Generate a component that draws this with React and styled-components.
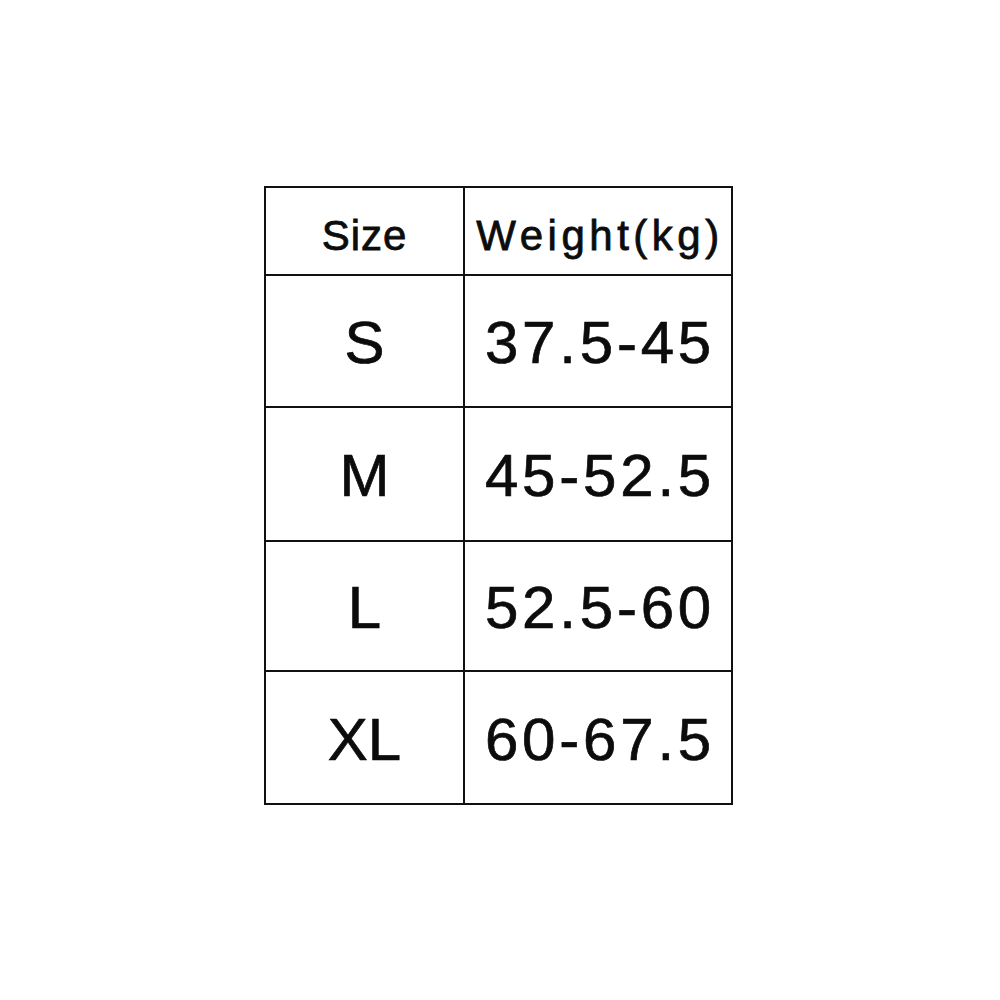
import React from "react";
import styled, { createGlobalStyle } from "styled-components";

const Global = createGlobalStyle`
  html, body { margin: 0; padding: 0; background: #fff; }
  body { font-family: "Liberation Sans", Arial, sans-serif; }
`;

const Page = styled.div`
  width: 1000px;
  height: 1000px;
  box-sizing: border-box;
  padding: 186px 0 0 264px;
  background: #fff;
`;

const Grid = styled.div`
  display: grid;
  grid-template-columns: 199px 268px;
  grid-template-rows: 88px 132px 134px 130px 133px;
  width: max-content;
  border-left: 2px solid #111;
  border-top: 2px solid #111;
`;

const Cell = styled.div`
  box-sizing: border-box;
  border-right: 2px solid #111;
  border-bottom: 2px solid #111;
  display: flex;
  align-items: center;
  justify-content: center;
  color: #0c0c0c;
  font-family: "Liberation Sans", Arial, sans-serif;
  font-size: ${(p) => (p.$head ? "42px" : "60px")};
  -webkit-text-stroke: ${(p) => (p.$head ? "0.8px" : "0.7px")} #0c0c0c;
  letter-spacing: ${(p) => (p.$head ? (p.$wide ? "4.5px" : "1px") : p.$num ? "3.8px" : "0")};
  padding-top: ${(p) => (p.$head ? "9px" : "4px")};
  padding-left: ${(p) => (p.$num ? "4px" : p.$wide ? "4px" : "0")};
  line-height: 1;
`;

const rows = [
  ["S", "37.5-45"],
  ["M", "45-52.5"],
  ["L", "52.5-60"],
  ["XL", "60-67.5"],
];

export default function App() {
  return (
    <Page>
      <Global />
      <Grid>
        <Cell $head>Size</Cell>
        <Cell $head $wide>Weight(kg)</Cell>
        {rows.map(([s, w]) => (
          <React.Fragment key={s}>
            <Cell>{s}</Cell>
            <Cell $num>{w}</Cell>
          </React.Fragment>
        ))}
      </Grid>
    </Page>
  );
}
